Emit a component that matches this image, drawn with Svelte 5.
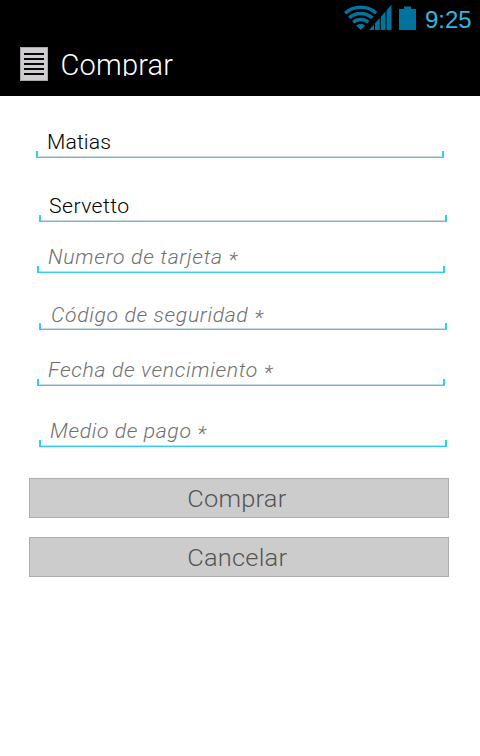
<script>
  const fields = [
    { text: 'Matias', left: 36, gap: 30, indent: 10.7, spacing: 0.1 },
    { text: 'Servetto', left: 39, gap: 32, indent: 10, spacing: 0.4 },
    { text: 'Numero de tarjeta ', left: 37, gap: 19, indent: 11.4, spacing: 0.66, hint: true },
    { text: 'Código de seguridad ', left: 39, gap: 25, indent: 12.4, spacing: 0.6, hint: true, low: true },
    { text: 'Fecha de vencimiento ', left: 37, gap: 24, indent: 11.4, spacing: 0.62, hint: true },
    { text: 'Medio de pago ', left: 39, gap: 29, indent: 11.4, spacing: 0.57, hint: true }
  ];
  const actions = ['Comprar', 'Cancelar'];
</script>

<div class="screen">
  <header>
    <div class="status">
      <svg class="signals" width="74" height="30" viewBox="0 0 74 30">
        <g fill="none" stroke="#00739f" stroke-width="3.5">
          <path d="M1.2 13.2A23.5 23.5 0 0 1 32.2 13.2" />
          <path d="M5.2 17.8A17.5 17.5 0 0 1 28.2 17.8" />
          <path d="M9.2 22.3A11.5 11.5 0 0 1 24.2 22.3" />
        </g>
        <path d="M12 25.5Q16.7 21.8 21.4 25.5L16.7 30Z" fill="#00739f" />
        <path d="M25 30L47.5 4.8V30Z" fill="#00739f" />
        <path d="M30.5 23.5V30M36.3 17V30M42 10V30" stroke="#000" stroke-width="1" />
        <path d="M55 9H60V6.5H67V9H72V30H55Z" fill="#00739f" />
      </svg>
      <span class="clock">9:25</span>
    </div>
    <div class="bar">
      <svg class="doc" width="28" height="34" viewBox="0 0 28 34">
        <rect x=".5" y=".5" width="27" height="33" fill="#cfcdd0" stroke="#aaa" />
        <path d="M4 7H24M4 12H24M4 17H24M4 22H24M4 27H24" stroke="#080808" stroke-width="2" />
      </svg>
      <h1>Comprar</h1>
    </div>
  </header>

  <form>
    {#each fields as f}
      <div class="field" class:hint={f.hint} class:low={f.low} style="margin-left:{f.left}px;margin-top:{f.gap}px;padding-left:{f.indent}px;letter-spacing:{f.spacing}px">
        <span class="text">{f.text}{#if f.hint}<span class="star">*</span>{/if}</span>
        <i class="underline"></i>
      </div>
    {/each}
    <div class="actions">
      {#each actions as label}
        <button type="button"><span class="label">{label}</span></button>
      {/each}
    </div>
  </form>
</div>

<style>
  .screen {
    width: 480px;
    height: 756px;
    overflow: hidden;
    background: #fff;
    font-family: Roboto, sans-serif;
    font-weight: 300;
  }
  header { height: 96px; background: #000; }
  .status { display: flex; height: 36px; padding-left: 344px; }
  .signals { flex: none; overflow: hidden; }
  .clock {
    margin-left: 7px;
    font: 400 24px/40px "Liberation Sans", Arial, sans-serif;
    color: #33b5e5;
    white-space: nowrap;
  }
  .bar { display: flex; padding: 11px 0 0 20px; }
  h1 {
    height: 29px;
    margin: 0 0 0 12.5px;
    overflow: hidden;
    color: #fff;
    font-size: 29px;
    font-weight: 300;
    line-height: 37px;
    letter-spacing: 0.2px;
  }
  form { display: flow-root; }
  .field {
    position: relative;
    box-sizing: border-box;
    width: 408px;
    height: 32px;
    font-size: 20px;
    line-height: 32px;
    color: #000;
    white-space: pre;
  }
  .low { line-height: 34px; }
  .hint { color: #707070; font-style: italic; }
  .text {
    display: inline-block;
    transform: scaleX(1.06);
    transform-origin: left;
  }
  .star { display: inline-block; transform: translateY(3px); }
  .underline {
    position: absolute;
    left: 0;
    right: 0;
    bottom: 0;
    box-sizing: border-box;
    height: 7px;
    border: solid #33ccf5;
    border-width: 0 2px 1px;
    background: linear-gradient(#c4dce4, #c4dce4) bottom / 100% 1px no-repeat;
  }
  .actions { display: flex; flex-direction: column; gap: 19px; margin: 31px 31px 0 29px; }
  button {
    height: 40px;
    padding: 0 4px 0 0;
    border: 1px solid #adadad;
    border-radius: 0;
    background: #ccc;
    color: #555;
    font: 300 24px/40px Roboto, sans-serif;
    letter-spacing: 0.2px;
  }
  .label { display: inline-block; transform: scaleX(1.06); }
</style>
